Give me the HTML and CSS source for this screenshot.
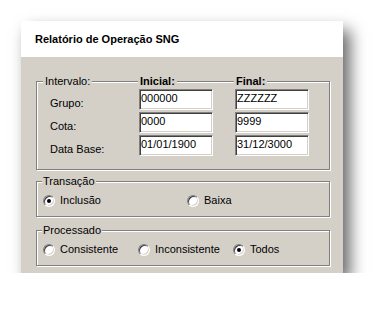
FILE: index.html
```html
<!DOCTYPE html>
<html><head><meta charset="utf-8"><meta name="viewport" content="width=device-width">
<title>Relatório de Operação SNG</title>
<link rel="stylesheet" href="styles.css">
</head>
<body>

<div class="window">
	<div class="title">Relatório de Operação SNG</div>
	<div class="panel">

		<div class="group interval">
			<div class="head cols">
				<span class="cap first">Intervalo:</span>
				<span class="cap bold">Inicial:</span>
				<span class="cap bold">Final:</span>
			</div>
			<div class="row cols">
				<span class="lbl">Grupo:</span>
				<input type="text" value="000000">
				<input type="text" value="ZZZZZZ">
			</div>
			<div class="row cols">
				<span class="lbl">Cota:</span>
				<input type="text" value="0000">
				<input type="text" value="9999">
			</div>
			<div class="row cols">
				<span class="lbl">Data Base:</span>
				<input type="text" value="01/01/1900">
				<input type="text" value="31/12/3000">
			</div>
		</div>

		<div class="group transacao">
			<div class="head"><span class="cap legend">Transação</span></div>
			<div class="opts">
				<label class="opt w1"><span class="radio on"></span>Inclusão</label>
				<label class="opt"><span class="radio"></span>Baixa</label>
			</div>
		</div>

		<div class="group processado">
			<div class="head"><span class="cap legend">Processado</span></div>
			<div class="opts">
				<label class="opt w2"><span class="radio"></span>Consistente</label>
				<label class="opt w2"><span class="radio"></span>Inconsistente</label>
				<label class="opt"><span class="radio on"></span>Todos</label>
			</div>
		</div>

	</div>
</div>

</body>
</html>
```

FILE: styles.css
```css
body {
	margin: 0;
	background: #fff;
	font-family: "Liberation Sans", Arial, sans-serif;
	font-size: 11px;
	color: #000;
}
.window {
	margin: 21px 0 0 21px;
	width: 322px;
	box-shadow: 7px 9px 15px rgba(0, 0, 0, .6);
}
.title {
	background: #fff;
	height: 36px;
	line-height: 36px;
	padding-left: 14px;
	font-weight: bold;
}
.panel {
	background: #d4d0c8;
	padding: 24px 0 6px 15px;
	height: 216px;
	box-sizing: border-box;
}
.group {
	width: 294px;
	box-sizing: border-box;
	border: 1px solid #808080;
	box-shadow: inset 1px 1px #fff, 1px 1px #fff;
}
.head {
	margin-top: -7px;
	height: 13px;
	line-height: 13px;
	display: flex;
}
.head.cols {
	display: grid;
}
.cap {
	background: #d4d0c8;
	padding: 0 2px;
	justify-self: start;
}
.cap.first {
	margin-left: 6px;
}
.cap.bold {
	font-weight: bold;
	margin-left: -1px;
}
.cap.legend {
	padding: 0 1px;
	margin-left: 5px;
}
.cols {
	display: grid;
	grid-template-columns: 102px 96px 74px;
}
.interval {
	padding-bottom: 13px;
}
.row {
	margin-top: 1px;
	height: 21px;
}
.row + .row {
	margin-top: 2px;
}
.lbl {
	padding: 8px 0 0 13px;
	line-height: 13px;
}
.row input {
	width: 74px;
	height: 21px;
	box-sizing: border-box;
	margin: 0;
	padding: 0 1px 3px;
	font: 11px "Liberation Sans", Arial, sans-serif;
	color: #000;
	background: #fff;
	border: 1px solid;
	border-color: #808080 #fff #fff #808080;
	box-shadow: inset 1px 1px #404040, inset -1px -1px #d4d0c8;
	outline: none;
}
.transacao {
	margin-top: 11px;
	padding-bottom: 9px;
}
.processado {
	margin-top: 13px;
	padding-bottom: 9px;
}
.opts {
	display: flex;
	margin-top: 6px;
	padding-left: 6px;
	height: 13px;
	line-height: 13px;
}
.opt {
	display: flex;
	align-items: center;
}
.w1 {
	width: 144px;
}
.w2 {
	width: 95px;
}
.radio {
	position: relative;
	width: 12px;
	height: 12px;
	box-sizing: border-box;
	border-radius: 50%;
	background: #fff;
	border: 1px solid;
	border-color: #808080 #fff #fff #808080;
	box-shadow: inset 1px 1px #404040, inset -1px -1px #d4d0c8;
	margin-right: 5px;
	flex: none;
}
.radio.on::after {
	content: "";
	position: absolute;
	left: 3px;
	top: 3px;
	width: 4px;
	height: 4px;
	border-radius: 50%;
	background: #000;
}
```
